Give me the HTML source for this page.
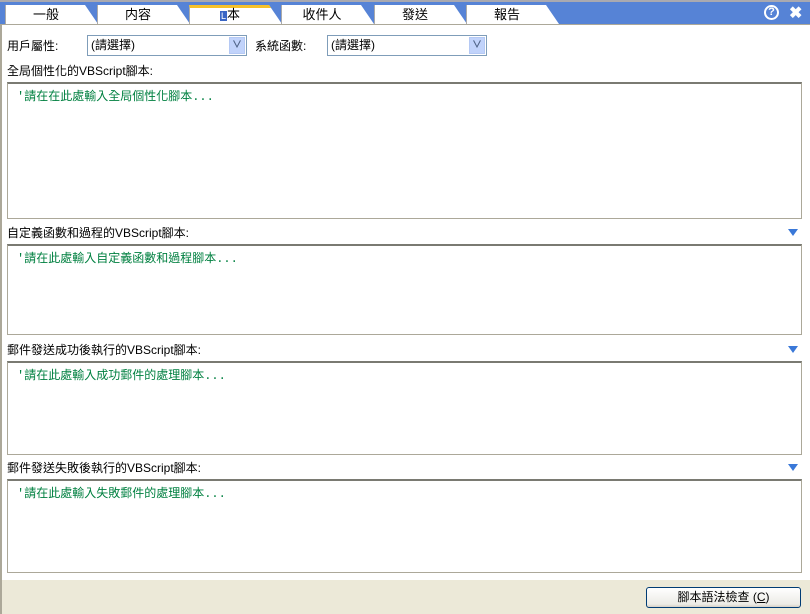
<!DOCTYPE html>
<html><head><meta charset="utf-8"><style>
*{margin:0;padding:0;box-sizing:border-box}
body{width:810px;height:614px;background:#fff;position:relative;overflow:hidden;font:12px "Liberation Sans","Noto Sans CJK TC",sans-serif;color:#000}
.a{position:absolute}
.band{left:0;top:0;width:810px;height:25px;background:#5683d6;border-top:2px solid #a9a9b0}
.tab{top:5px;width:93px;height:19px;background:#fff;text-align:center;line-height:19px;font-size:13px;clip-path:polygon(0 0,80px 0,93px 19px,0 19px);border-left:1px solid #aaa;padding-right:12px}
.line{left:0;top:24px;width:810px;height:1px;background:#aca899}
.sel{height:21px;border:1px solid #7f9db9;background:#fff;line-height:19px;padding-left:3px}
.sel i{position:absolute;right:1px;top:1px;width:16px;height:17px;background:#c1d3fb;border:1px solid #b5c9f4;font-style:normal;color:#4d6185;font-size:10px;font-weight:bold;text-align:center;line-height:15px}
.box{left:7px;width:795px;border:1px solid #aca899;border-top:2px solid #7a7a72;background:#fff}
.box span{position:absolute;left:9px;top:3px;color:#008040;font-family:"Liberation Mono","Noto Sans CJK TC",monospace;font-size:12px}
.arr{left:788px;width:10px;height:7px;background:#3a78d8;clip-path:polygon(0 0,100% 0,50% 100%)}
</style></head><body>
<div class="a band"></div>
<div class="a tab" style="left:5px">一般</div>
<div class="a tab" style="left:97px">内容</div>
<div class="a tab" style="left:189px;border-top:3px solid #f6c12a;line-height:14px">
<span style="background:#3a66c4;color:#fff;font-size:9px;padding:0 1px">L</span>本</div>
<div class="a tab" style="left:281px">收件人</div>
<div class="a tab" style="left:374px">發送</div>
<div class="a tab" style="left:466px">報告</div>
<div class="a line"></div>
<div class="a" style="left:764px;top:5px;width:15px;height:15px;border:2px solid #fff;border-radius:50%;color:#fff;font-size:11px;font-weight:bold;text-align:center;line-height:11px">?</div>
<div class="a" style="left:789px;top:3px;color:#fff;font-size:16px;font-weight:bold">✖</div>
<div class="a" style="left:0;top:25px;width:2px;height:589px;background:#aca899"></div>
<div class="a" style="left:7px;top:37px">用戶屬性:</div>
<div class="a sel" style="left:87px;top:35px;width:160px">(請選擇)<i>∨</i></div>
<div class="a" style="left:255px;top:37px">系統函數:</div>
<div class="a sel" style="left:327px;top:35px;width:160px">(請選擇)<i>∨</i></div>
<div class="a" style="left:7px;top:62px">全局個性化的VBScript腳本:</div>
<div class="a box" style="top:82px;height:137px"><span>'請在在此處輸入全局個性化腳本...</span></div>
<div class="a" style="left:7px;top:224px">自定義函數和過程的VBScript腳本:</div>
<div class="a arr" style="top:229px"></div>
<div class="a box" style="top:244px;height:91px"><span>'請在此處輸入自定義函數和過程腳本...</span></div>
<div class="a" style="left:7px;top:341px">郵件發送成功後執行的VBScript腳本:</div>
<div class="a arr" style="top:346px"></div>
<div class="a box" style="top:361px;height:94px"><span>'請在此處輸入成功郵件的處理腳本...</span></div>
<div class="a" style="left:7px;top:459px">郵件發送失敗後執行的VBScript腳本:</div>
<div class="a arr" style="top:464px"></div>
<div class="a box" style="top:479px;height:94px"><span>'請在此處輸入失敗郵件的處理腳本...</span></div>
<div class="a" style="left:2px;top:580px;width:808px;height:34px;background:#ece9d8"></div>
<div class="a" style="left:646px;top:587px;width:155px;height:21px;border:1px solid #003c74;border-radius:3px;background:linear-gradient(#fff,#ecebe6 85%,#d6d0c5);text-align:center;line-height:19px">腳本語法檢查 (<u>C</u>)</div>
</body></html>
